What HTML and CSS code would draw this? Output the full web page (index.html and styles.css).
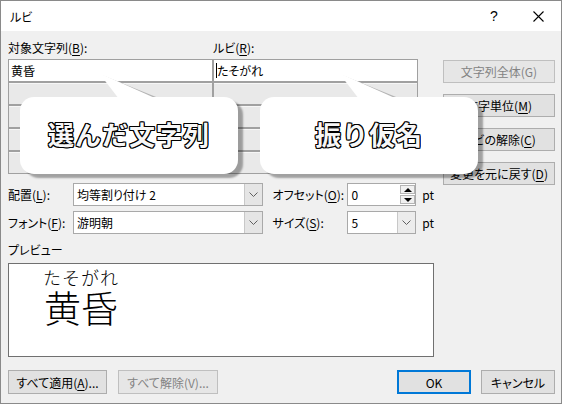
FILE: index.html
```html
<!DOCTYPE html>
<html lang="ja">

<head>
    <meta charset="UTF-8">
    <meta name="viewport" content="width=device-width, initial-scale=1.0">
    <title>ルビ</title>
    <link rel="stylesheet" href="styles.css">
</head>

<body>
    <div class="dialog">
        <div class="titlebar">
            <span class="title">ルビ</span>
            <span class="tb-btn help">?</span>
            <span class="tb-btn close">
                <svg width="11" height="11" viewBox="0 0 11 11">
                    <path d="M0.5 0.5 L10.5 10.5 M10.5 0.5 L0.5 10.5" stroke="#000" stroke-width="1.1" fill="none" />
                </svg>
            </span>
        </div>

        <div class="content">
            <div class="main">
                <div class="left">
                    <div class="heads">
                        <span class="head-base">対象文字列(<u>B</u>):</span>
                        <span>ルビ(<u>R</u>):</span>
                    </div>

                    <div class="pairs">
                        <div class="cell cell-edit">黄昏</div>
                        <div class="cell cell-edit"><span class="caret"></span>たそがれ</div>
                        <div class="cell"></div>
                        <div class="cell"></div>
                        <div class="cell"></div>
                        <div class="cell"></div>
                        <div class="cell"></div>
                        <div class="cell"></div>
                        <div class="cell"></div>
                        <div class="cell"></div>
                    </div>

                    <div class="setting-row">
                        <span class="lab">配置(<u>L</u>):</span>
                        <div class="select">
                            <span class="val">均等割り付け 2</span>
                            <span class="drop">
                                <svg width="9" height="5" viewBox="0 0 9 5">
                                    <polyline points="0.5,0.5 4.5,4.5 8.5,0.5" stroke="#606060" fill="none" />
                                </svg>
                            </span>
                        </div>
                        <span class="lab2">オフセット(<u>O</u>):</span>
                        <div class="num">
                            <span class="val">0</span>
                            <span class="spin">
                                <span class="spin-btn"><span class="tri-up"></span></span>
                                <span class="spin-btn"><span class="tri-down"></span></span>
                            </span>
                        </div>
                        <span class="unit">pt</span>
                    </div>

                    <div class="setting-row second">
                        <span class="lab">フォント(<u>F</u>):</span>
                        <div class="select">
                            <span class="val">游明朝</span>
                            <span class="drop">
                                <svg width="9" height="5" viewBox="0 0 9 5">
                                    <polyline points="0.5,0.5 4.5,4.5 8.5,0.5" stroke="#606060" fill="none" />
                                </svg>
                            </span>
                        </div>
                        <span class="lab2">サイズ(<u>S</u>):</span>
                        <div class="num">
                            <span class="val">5</span>
                            <span class="drop small">
                                <svg width="9" height="5" viewBox="0 0 9 5">
                                    <polyline points="0.5,0.5 4.5,4.5 8.5,0.5" stroke="#606060" fill="none" />
                                </svg>
                            </span>
                        </div>
                        <span class="unit">pt</span>
                    </div>

                    <div class="prev-label">プレビュー</div>
                    <div class="preview">
                        <div class="ruby">
                            <div class="rt">たそがれ</div>
                            <div class="rb">黄昏</div>
                        </div>
                    </div>
                </div>

                <div class="side">
                    <div class="btn disabled">文字列全体(G)</div>
                    <div class="btn">文字単位(<u>M</u>)</div>
                    <div class="btn">ルビの解除(<u>C</u>)</div>
                    <div class="btn">変更を元に戻す(<u>D</u>)</div>
                </div>
            </div>

            <div class="footer">
                <div class="btn btn-all">すべて適用(<u>A</u>)...</div>
                <div class="btn btn-clear disabled">すべて解除(V)...</div>
                <div class="btn btn-ok">OK</div>
                <div class="btn btn-cancel">キャンセル</div>
            </div>
        </div>

        <!-- callouts over the dialog -->
        <div class="callout callout-base">
            <svg class="pointer" width="70" height="26" viewBox="0 0 70 26">
                <polygon points="3,2 24,26 62,26" fill="#b4b4b4" />
                <polygon points="0,0 20,26 58,26" fill="#fff" />
            </svg>
            <div class="bubble">選んだ文字列</div>
        </div>
        <div class="callout callout-ruby">
            <svg class="pointer" width="70" height="26" viewBox="0 0 70 26">
                <polygon points="3,2 24,26 62,26" fill="#b4b4b4" />
                <polygon points="0,0 20,26 58,26" fill="#fff" />
            </svg>
            <div class="bubble">振り仮名</div>
        </div>
    </div>
</body>

</html>
```

FILE: styles.css
```css
body {
    margin: 0;
    background-color: #fff;
    font-family: "Noto Sans CJK JP", sans-serif;
    font-size: 12px;
    color: #000;
    font-feature-settings: "palt";
    white-space: nowrap;
}

u {
    text-underline-offset: 2px;
}

.dialog {
    position: relative;
    width: 562px;
    height: 404px;
    box-sizing: border-box;
    border: 1px solid #8a8a8a;
    background-color: #f0f0f0;
}

.titlebar {
    display: flex;
    align-items: center;
    height: 30px;
    background-color: #fff;
}

.title {
    margin-left: 9px;
    flex: 1;
    font-size: 12px;
}

.tb-btn {
    width: 46px;
    height: 30px;
    display: flex;
    align-items: center;
    justify-content: center;
}

.help {
    font-size: 14px;
    font-family: "Liberation Sans", sans-serif;
    padding-left: 4px;
    box-sizing: border-box;
}

.content {
    padding: 9px 0 0 7px;
}

.main {
    display: flex;
    gap: 9px;
}

.left {
    width: 426px;
}

.heads {
    display: flex;
    height: 16px;
    line-height: 16px;
    margin-bottom: 3px;
}

.head-base {
    width: 205px;
}

.pairs {
    display: grid;
    grid-template-columns: 203px 203px;
    grid-auto-rows: 21px;
    gap: 2px;
    width: 410px;
    box-sizing: border-box;
    border: 1px solid #a0a0a0;
    background-color: #a0a0a0;
}

.cell {
    background-color: #e9e9e9;
    border-top: 1px solid #f6f6f6;
}

.cell-edit {
    background-color: #fff;
    border-top: none;
    line-height: 21px;
    padding-left: 2px;
    display: flex;
    align-items: center;
}

.caret {
    width: 1px;
    height: 15px;
    background-color: #000;
}

.setting-row {
    display: flex;
    align-items: center;
    height: 23px;
    margin-top: 9px;
}

.setting-row.second {
    margin-top: 5px;
}

.lab {
    width: 65px;
}

.lab2 {
    width: 75px;
    margin-left: 10px;
}

.select,
.num {
    display: flex;
    height: 23px;
    box-sizing: border-box;
    border: 1px solid #a9a9a9;
    background-color: #fff;
}

.select {
    width: 190px;
}

.num {
    width: 69px;
}

.val {
    flex: 1;
    padding-left: 3px;
    line-height: 21px;
}

.drop {
    width: 17px;
    display: flex;
    align-items: center;
    justify-content: center;
    background-color: #e5e5e5;
    border-left: 1px solid #c8c8c8;
}

.drop.small {
    background-color: #ececec;
}

.spin {
    width: 15px;
    display: flex;
    flex-direction: column;
    gap: 1px;
    padding: 1px 0;
}

.spin-btn {
    flex: 1;
    display: flex;
    align-items: center;
    justify-content: center;
    background-color: #f0f0f0;
    border: 1px solid #b4b4b4;
}

.tri-up {
    border-left: 4px solid transparent;
    border-right: 4px solid transparent;
    border-bottom: 4px solid #000;
}

.tri-down {
    border-left: 4px solid transparent;
    border-right: 4px solid transparent;
    border-top: 4px solid #000;
}

.unit {
    margin-left: 6px;
}

.prev-label {
    margin-top: 8px;
    height: 16px;
    line-height: 16px;
}

.preview {
    margin-top: 5px;
    height: 94px;
    box-sizing: border-box;
    border: 1px solid #707070;
    background-color: #fff;
    padding: 4px 0 0 34px;
}

.ruby {
    display: inline-flex;
    flex-direction: column;
    align-items: center;
    font-feature-settings: normal;
}

.rt {
    font-size: 18px;
    line-height: 18px;
    font-weight: 300;
    letter-spacing: 1px;
}

.rb {
    margin-top: 3px;
    font-size: 37px;
    line-height: 37px;
    font-weight: 300;
}

.side {
    padding-top: 20px;
    display: flex;
    flex-direction: column;
    gap: 11px;
}

.btn {
    box-sizing: border-box;
    height: 23px;
    width: 112px;
    border: 1px solid #adadad;
    background-color: #e1e1e1;
    display: flex;
    align-items: center;
    justify-content: center;
}

.btn.disabled {
    color: #838383;
    border-color: #bfbfbf;
    background-color: #e6e6e6;
}

.footer {
    display: flex;
    margin-top: 13px;
    gap: 11px;
}

.footer .btn {
    height: 24px;
}

.btn-all {
    width: 99px !important;
}

.btn-clear {
    width: 100px !important;
}

.btn-ok {
    width: 74px !important;
    margin-left: 168px;
    border: 2px solid #0078d7;
}

.btn-cancel {
    width: 74px !important;
    margin-left: -1px;
}

/* callouts */
.callout {
    position: absolute;
    top: 96px;
    width: 218px;
    height: 77px;
}

.callout-base {
    left: 19px;
}

.callout-ruby {
    left: 259px;
}

.pointer {
    position: absolute;
    left: 79px;
    top: -24px;
}

.bubble {
    position: relative;
    height: 100%;
    border-radius: 14px;
    background-color: #fff;
    box-shadow: 5px 4px 2px rgba(0, 0, 0, 0.33);
    display: flex;
    align-items: center;
    justify-content: center;
    padding-bottom: 5px;
    box-sizing: border-box;
    font-size: 26px;
    font-weight: 700;
    letter-spacing: 1px;
    color: #f7f7f7;
    font-feature-settings: normal;
    text-shadow: 1px 0 0 #000, -1px 0 0 #000, 0 1px 0 #000, 0 -1px 0 #000,
        1px 1px 0 #000, -1px -1px 0 #000, 1px -1px 0 #000, -1px 1px 0 #000;
}
```
